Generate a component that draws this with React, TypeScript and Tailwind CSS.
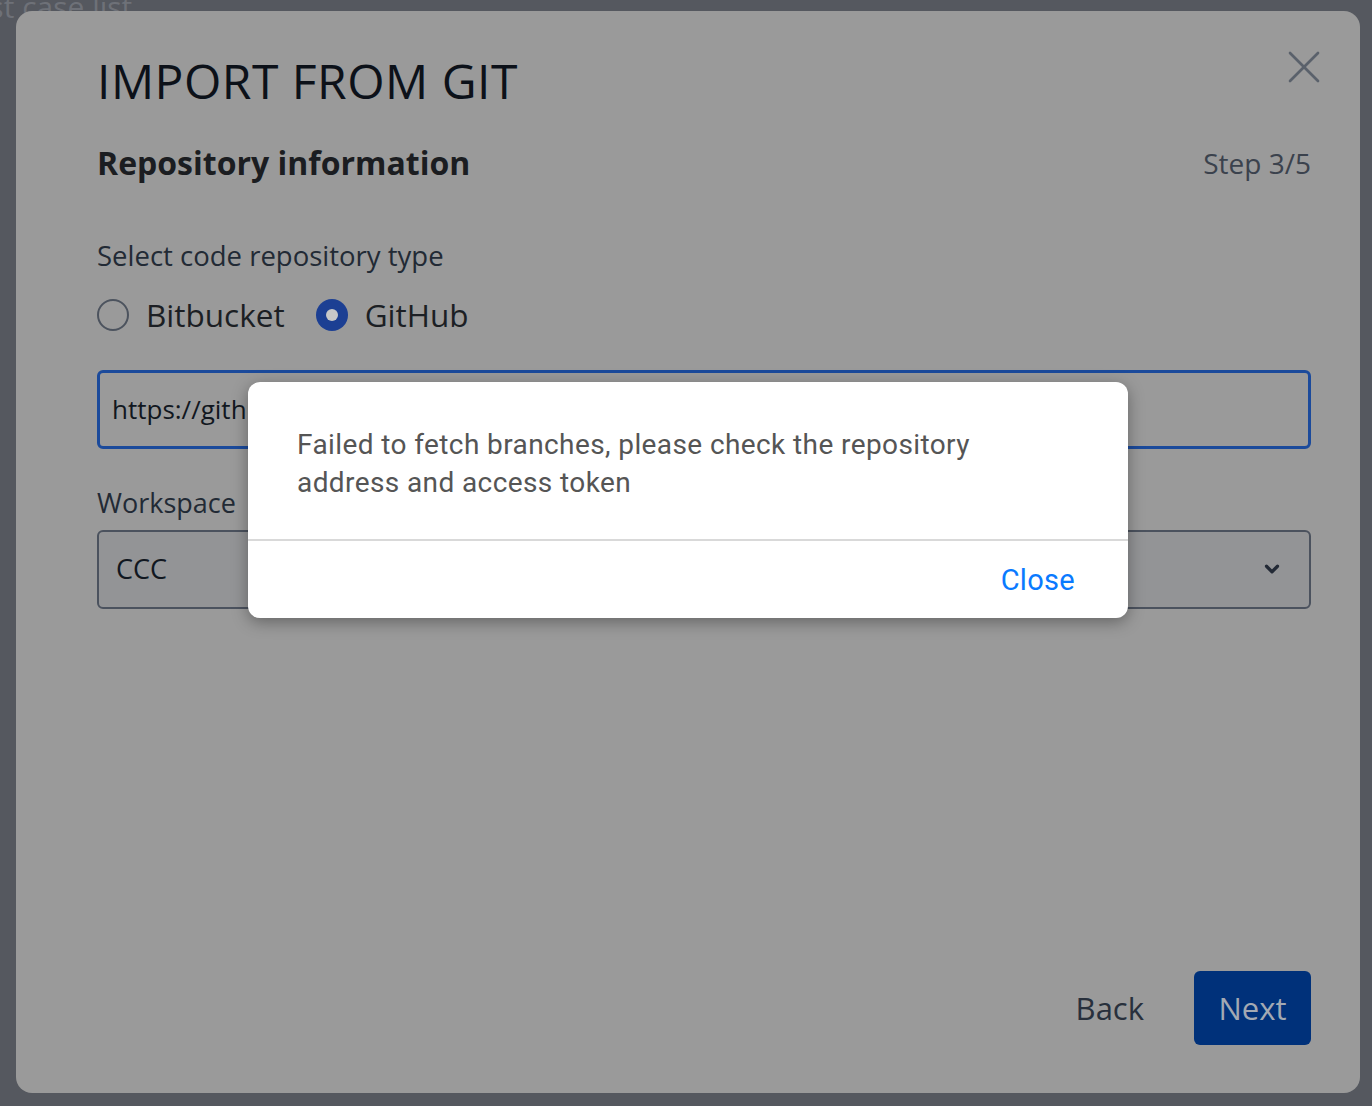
import { ChevronDown, X } from 'lucide-react';

const ubuntu = { fontFamily: '"Open Sans", "Noto Sans", sans-serif' };

function Radio({ label, checked }: { label: string; checked?: boolean }) {
  return (
    <label className="flex items-center gap-[17px]">
      {checked ? (
        <span className="flex h-8 w-8 items-center justify-center rounded-full bg-[#1c3f93]">
          <span className="h-3 w-3 rounded-full bg-[#c8c8c8]" />
        </span>
      ) : (
        <span className="h-8 w-8 rounded-full border-2 border-[#4c535e]" />
      )}
      <span className="text-[31.5px] text-[#1c1f24]">{label}</span>
    </label>
  );
}

function AlertDialog() {
  return (
    <div
      className="absolute left-[248px] top-[382px] w-[880px] rounded-xl bg-white shadow-[0_4px_16px_rgba(0,0,0,0.35)]"
      style={{ fontFamily: 'Roboto, "Liberation Sans", sans-serif' }}
    >
      <div className="px-[49px] pt-[44px] pb-[37px] text-[28px] leading-[38px] tracking-[0.4px] text-[#555555]">
        Failed to fetch branches, please check the repository
        <br />
        address and access token
      </div>
      <div className="flex h-[79px] items-center justify-end border-t-2 border-[#d9d9d9] pr-[53px]">
        <button className="pt-[3px] text-[29px] tracking-[0.3px] text-[#0a7aff]">Close</button>
      </div>
    </div>
  );
}

export default function App() {
  return (
    <div className="relative h-[1106px] w-[1372px] overflow-hidden bg-[#55585f]" style={ubuntu}>
      <div className="absolute -left-[44px] -top-[16px] text-[30px] text-[#6e7178]">Test case list</div>

      <div className="absolute left-[16px] top-[11px] flex h-[1082px] w-[1344px] flex-col rounded-2xl bg-[#9a9a9a] pb-[48px] pl-[81px] pr-[49px] pt-[40px]">
        <button className="absolute right-[28px] top-[28px] text-[#5a616b]">
          <X size={56} strokeWidth={1.15} />
        </button>

        <h1 className="text-[48px] leading-[60px] tracking-[0.5px] text-[#0c1119]">IMPORT FROM GIT</h1>

        <div className="mt-[31px] flex items-center justify-between">
          <h2 className="text-[32px] font-bold leading-[40px] text-[#1b1d21]">Repository information</h2>
          <span className="text-[28px] text-[#3b424d]">Step 3/5</span>
        </div>

        <p className="mt-[52px] text-[27.5px] leading-[40px] text-[#222a35]">Select code repository type</p>
        <div className="mt-[15px] flex items-center gap-[31px]">
          <Radio label="Bitbucket" />
          <Radio label="GitHub" checked />
        </div>

        <div className="mt-[32px] flex h-[79px] items-center rounded-md border-[3px] border-[#1b4a9b] px-[12px] text-[26px] text-[#111720]">
          https://github.com/
        </div>

        <p className="mt-[34px] text-[27px] text-[#222a35]">Workspace</p>
        <div className="mt-[6px] flex h-[79px] items-center justify-between rounded-md border-2 border-[#4b525e] bg-[#939496] pl-[17px] pr-[26px] text-[27px] text-[#111720]">
          <span>CCC</span>
          <ChevronDown size={22} strokeWidth={3.5} className="text-[#232a36]" />
        </div>

        <div className="mt-auto flex items-center justify-end gap-[50px]">
          <button className="text-[31px] text-[#28303c]">Back</button>
          <button className="h-[74px] w-[117px] rounded-md bg-[#00317a] text-[31px] text-[#a3a9b3]">Next</button>
        </div>
      </div>

      <AlertDialog />
    </div>
  );
}
